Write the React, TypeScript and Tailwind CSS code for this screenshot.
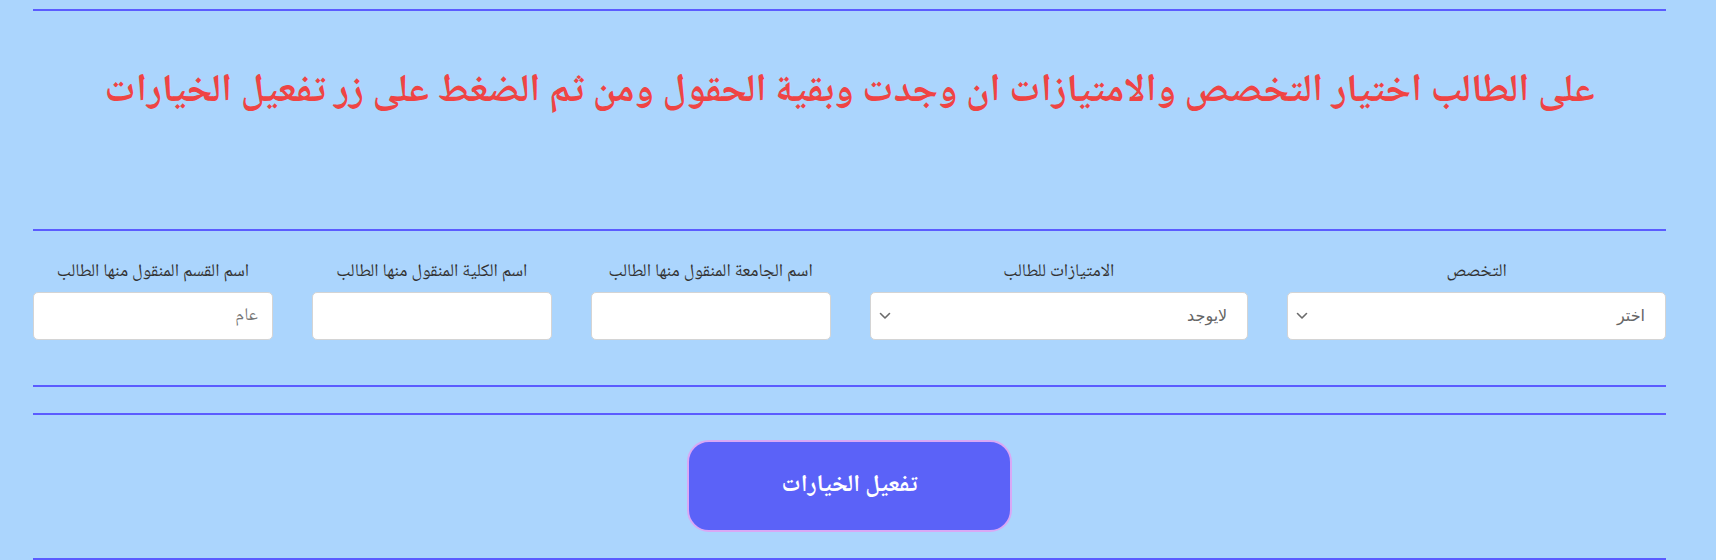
import React from "react";

const naskh = "font-['Noto_Naskh_Arabic','Noto_Serif_Arabic','Amiri','Scheherazade_New','FreeSerif','Noto_Sans_Arabic','DejaVu_Sans',serif]";

function Chevron() {
  return (
    <svg
      className="pointer-events-none absolute left-[9px] top-1/2 -translate-y-1/2"
      width="12"
      height="8"
      viewBox="0 0 12 8"
      fill="none"
    >
      <path d="M1.5 1.5 L6 6 L10.5 1.5" stroke="#6b6b6b" strokeWidth="1.6" strokeLinecap="round" strokeLinejoin="round" />
    </svg>
  );
}

function Line() {
  return <div className="h-[2px] w-full bg-[#5b5cff]" />;
}

function SelectField({ label, value, width }: { label: string; value: string; width: string }) {
  return (
    <div className={`flex flex-col items-center ${width}`}>
      <div className={`h-[24px] text-[18px] leading-[24px] text-[#333] ${naskh}`}>{label}</div>
      <div className="relative mt-[8px] h-[48px] w-full">
        <select
          defaultValue={value}
          className="h-full w-full appearance-none rounded-[5px] border border-[#d4d4d4] bg-white pr-[20px] pl-[28px] text-[16px] text-[#666] font-['Liberation_Sans','DejaVu_Sans',sans-serif] outline-none"
        >
          <option value={value}>{value}</option>
        </select>
        <Chevron />
      </div>
    </div>
  );
}

function InputField({ label, placeholder }: { label: string; placeholder?: string }) {
  return (
    <div className="flex w-[240px] flex-col items-center">
      <div className={`h-[24px] text-[18px] leading-[24px] text-[#333] ${naskh}`}>{label}</div>
      <input
        type="text"
        placeholder={placeholder}
        className={`mt-[8px] h-[48px] w-full rounded-[5px] border border-[#d4d4d4] bg-white px-[14px] text-[18px] text-[#333] placeholder:text-[#777] outline-none ${naskh}`}
      />
    </div>
  );
}

export default function App() {
  return (
    <div className="h-[560px] w-full overflow-hidden bg-[#abd5fd]">
      <div dir="rtl" className="ml-[33px] w-[1633px] pt-[9px]">
        <Line />
        <div className="flex h-[218px] justify-center pt-[54px]">
          <h1 className={`text-[39px] font-bold leading-[56px] text-[#ef4444] ${naskh}`}>
            على الطالب اختيار التخصص والامتيازات ان وجدت وبقية الحقول ومن ثم الضغط على زر تفعيل الخيارات
          </h1>
        </div>
        <Line />
        <div className="flex gap-[39px] pt-[29px] pb-[45px]">
          <SelectField label="التخصص" value="اختر" width="w-[379px]" />
          <SelectField label="الامتيازات للطالب" value="لايوجد" width="w-[379px]" />
          <InputField label="اسم الجامعة المنقول منها الطالب" />
          <InputField label="اسم الكلية المنقول منها الطالب" />
          <InputField label="اسم القسم المنقول منها الطالب" placeholder="عام" />
        </div>
        <Line />
        <div className="h-[26px]" />
        <Line />
        <div className="flex justify-center pt-[25px] pb-[26px]">
          <button
            className={`h-[92px] w-[325px] rounded-[22px] border-2 border-[#d9a8f5] bg-[#5b62f8] text-[24px] font-bold text-white ${naskh}`}
          >
            تفعيل الخيارات
          </button>
        </div>
        <Line />
      </div>
    </div>
  );
}
